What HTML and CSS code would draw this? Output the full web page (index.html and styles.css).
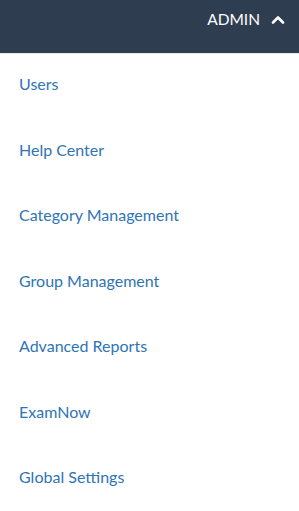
FILE: index.html
```html
<!DOCTYPE html>
<html lang="en">
<head>
    <meta charset="UTF-8">
    <meta name="viewport" content="width=device-width, initial-scale=1.0">
    <title>Admin</title>
    <link rel="stylesheet" href="styles.css">
</head>
<body>
    <div class="topbar">
        <button class="admin-toggle" type="button">
            <span>ADMIN</span>
            <svg class="chevron" width="14" height="9" viewBox="0 0 14 9">
                <path d="M2 7.5 L7 2.5 L12 7.5" fill="none" stroke="#fff" stroke-width="2.6" stroke-linecap="round" stroke-linejoin="round"/>
            </svg>
        </button>
    </div>
    <ul class="admin-menu">
        <li><a href="#">Users</a></li>
        <li><a href="#">Help Center</a></li>
        <li><a href="#">Category Management</a></li>
        <li><a href="#">Group Management</a></li>
        <li><a href="#">Advanced Reports</a></li>
        <li><a href="#">ExamNow</a></li>
        <li><a href="#">Global Settings</a></li>
    </ul>
</body>
</html>
```

FILE: styles.css
```css
body {
    margin: 0;
    font-family: Lato, "Open Sans", sans-serif;
    background: #fff;
}
.topbar {
    height: 53px;
    background-color: #2e3e50;
    border-bottom: 1px solid #e6e8eb;
    display: flex;
    justify-content: flex-end;
    align-items: flex-start;
}
.admin-toggle {
    display: flex;
    align-items: center;
    gap: 11px;
    margin-top: 10px;
    padding: 0 14px 0 0;
    background: none;
    border: none;
    color: #fff;
    font-family: inherit;
    font-size: 15.5px;
    cursor: pointer;
}
.admin-menu {
    list-style: none;
    margin: 0;
    padding: 0;
}
.admin-menu li {
    height: 65.5px;
    display: flex;
    align-items: center;
    padding-left: 19px;
}
.admin-menu li:first-child {
    margin-top: -3px;
}
.admin-menu a {
    color: #2f74b5;
    text-decoration: none;
    font-size: 16px;
}
```
